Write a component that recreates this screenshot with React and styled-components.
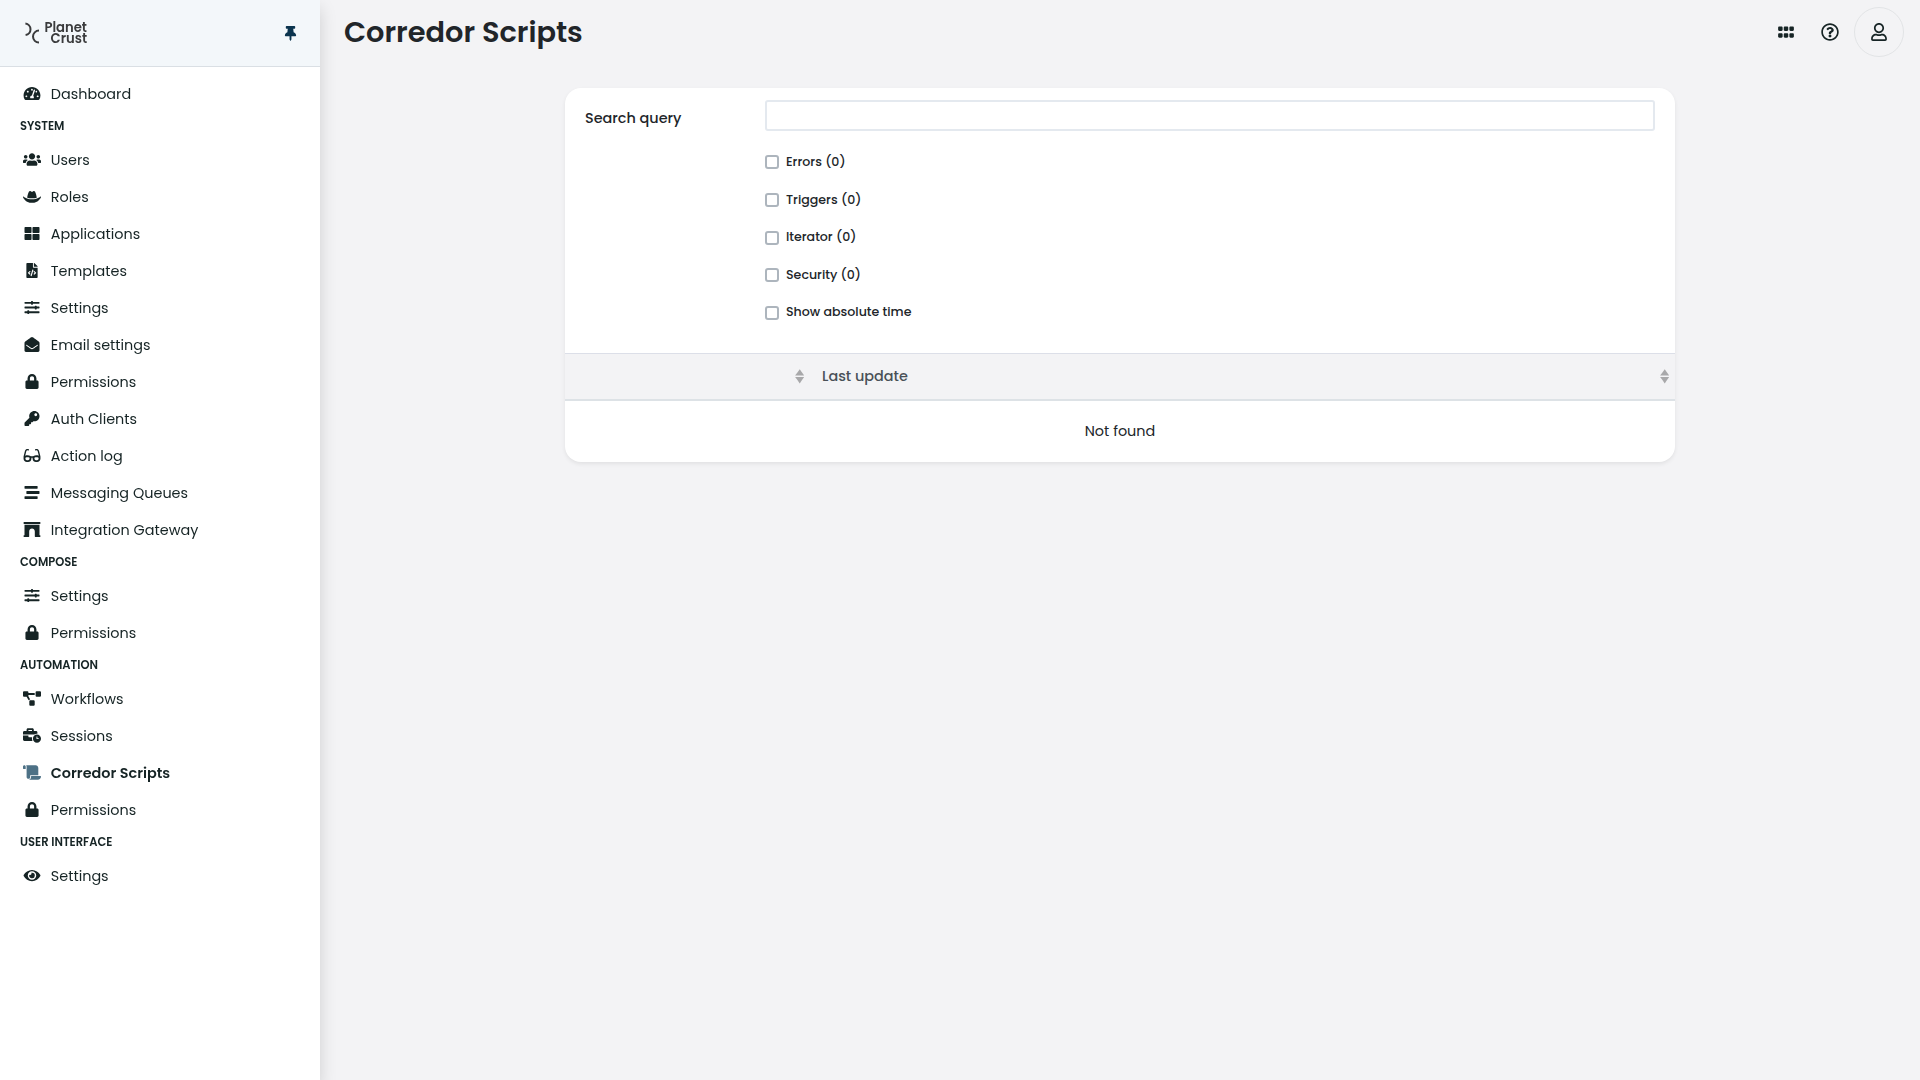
import React from 'react';
import styled, { createGlobalStyle } from 'styled-components';
import {
  FaTachometerAlt, FaUsers, FaHatCowboy, FaThLarge, FaFileCode, FaSlidersH, FaEnvelopeOpen, FaLock, FaKey,
  FaGlasses, FaStream, FaArchway, FaProjectDiagram, FaBusinessTime, FaScroll, FaEye, FaThumbtack,
  FaGripHorizontal, FaRegQuestionCircle, FaRegUser,
} from 'react-icons/fa';

const GlobalStyle = createGlobalStyle`
  *, *::before, *::after { box-sizing: border-box; }
  body {
    margin: 0;
    background: #f3f3f5;
    color: #212529;
    font-family: Poppins, Inter, "Liberation Sans", sans-serif;
    font-size: 14.4px;
    line-height: 1.5;
  }
`;

const Page = styled.div`
  display: flex;
  height: 100vh;
  overflow: hidden;
`;

const Sidebar = styled.aside`
  flex: 0 0 320px;
  display: flex;
  flex-direction: column;
  background: #fff;
  color: #162425;
  box-shadow: 0 8px 16px rgba(0, 0, 0, 0.15);
  will-change: transform;
`;

const SidebarHeader = styled.div`
  height: 67px;
  display: flex;
  align-items: center;
  justify-content: space-between;
  padding: 0 24px 0 25px;
  background: #f3f7fa;
  border-bottom: 1px solid #dadfe4;
`;

const Logo = styled.div`
  display: flex;
  align-items: center;
  gap: 4.4px;
  color: #3a3b3c;

  svg { display: block; }
`;

const LogoText = styled.div`
  display: flex;
  flex-direction: column;
  align-items: flex-end;
  font-size: 13.2px;
  font-weight: 600;
  line-height: 11px;
`;

const PinButton = styled.button`
  display: flex;
  justify-content: center;
  width: 11px;
  padding: 0;
  border: 0;
  background: none;
  color: #0b344e;
  font-size: 15px;

  svg { flex: none; }
`;

const Nav = styled.nav`
  display: flex;
  flex-direction: column;
  padding: 9.5px 20px 0;
`;

const NavHeading = styled.div`
  height: 29px;
  padding-bottom: 2px;
  display: flex;
  align-items: center;
  font-size: 11.52px;
  font-weight: 600;
  text-transform: uppercase;
`;

const NavItem = styled.a`
  height: 37px;
  display: flex;
  align-items: center;
  gap: 9.8px;
  padding-left: 3px;
  font-weight: ${(p) => (p.$active ? 600 : 400)};

  svg {
    width: 18px;
    height: 15px;
    margin-bottom: 3px;
    color: ${(p) => (p.$active ? '#4d7186' : 'inherit')};
  }
`;

const Main = styled.main`
  flex: 1;
  display: flex;
  flex-direction: column;
`;

const Topbar = styled.header`
  height: 64px;
  display: flex;
  align-items: center;
  justify-content: space-between;
  padding: 0 16px 0 24px;
`;

const Title = styled.h1`
  margin: 0;
  font-size: 28.8px;
  font-weight: 600;
  line-height: 1.2;
`;

const Tools = styled.div`
  display: flex;
  align-items: center;
  color: #162425;
  font-size: 18px;
`;

const Tool = styled.button`
  width: ${(p) => p.$width}px;
  height: 44px;
  display: flex;
  align-items: center;
  justify-content: center;
  padding: 0;
  border: 0;
  background: none;
  color: inherit;
  font-size: inherit;
`;

const Avatar = styled(Tool)`
  height: 50px;
  margin-left: 2px;
  border: 1px solid #e2e4e6;
  border-radius: 50%;
`;

const Content = styled.section`
  display: flex;
  justify-content: center;
  padding-top: 24px;
`;

const Card = styled.div`
  width: 1110px;
  height: 374px;
  overflow: hidden;
  border-radius: 16px;
  background: #fff;
  box-shadow: 0 2px 4px rgba(0, 0, 0, 0.075);
`;

const Filters = styled.div`
  height: 265px;
  display: grid;
  grid-template-columns: 180px 890px;
  padding: 12px 20px 0;
`;

const FilterLabel = styled.label`
  padding-top: 8.3px;
  font-weight: 500;
`;

const SearchInput = styled.input`
  display: block;
  width: 100%;
  height: 31px;
  margin-bottom: 12.7px;
  border: 2px solid #e4e9ef;
  border-radius: 3px;
  background: #fff;
  font: inherit;
`;

const Check = styled.label`
  height: 37.6px;
  display: flex;
  align-items: center;
  gap: 7px;
  font-size: 12.6px;
  font-weight: 500;

  span { padding-bottom: 0.1px; }
`;

const Box = styled.input`
  appearance: none;
  width: 14px;
  height: 14px;
  margin: 0;
  border: 2px solid #adb5bd;
  border-radius: 3px;
  background: #fff;
`;

const TableHead = styled.div`
  height: 48px;
  display: grid;
  grid-template-columns: 245px 1fr;
  border-top: 1px solid #dcdfe8;
  border-bottom: 2px solid #dde2e6;
  background: #f3f3f5;
`;

const HeadCell = styled.div`
  display: flex;
  align-items: center;
  justify-content: space-between;
  padding: 0 6px 0 12px;
  color: #495057;
  font-weight: 500;

  svg { margin-left: auto; }
`;

const Empty = styled.div`
  height: 61px;
  display: flex;
  align-items: center;
  justify-content: center;
`;

const SortIcon = () => (
  <svg width="9.36" height="14.4" viewBox="0 0 101 101" preserveAspectRatio="none" fill="#000" opacity="0.3">
    <path d="M51 1l25 23 24 22H1l25-22zM51 101l25-23 24-22H1l25 22z" />
  </svg>
);

const LogoMark = () => (
  <svg width="15" height="22" viewBox="0 0 15 22" fill="none" stroke="currentColor" strokeWidth="2">
    <path d="M0.4 1.6A5.75 5.75 0 0 1 0.6 13" />
    <path d="M14 8.6A6 6 0 0 0 14 20.6" />
  </svg>
);

const sections = [
  { items: [[FaTachometerAlt, 'Dashboard']] },
  {
    heading: 'System',
    items: [
      [FaUsers, 'Users'],
      [FaHatCowboy, 'Roles'],
      [FaThLarge, 'Applications'],
      [FaFileCode, 'Templates'],
      [FaSlidersH, 'Settings'],
      [FaEnvelopeOpen, 'Email settings'],
      [FaLock, 'Permissions'],
      [FaKey, 'Auth Clients'],
      [FaGlasses, 'Action log'],
      [FaStream, 'Messaging Queues'],
      [FaArchway, 'Integration Gateway'],
    ],
  },
  { heading: 'Compose', items: [[FaSlidersH, 'Settings'], [FaLock, 'Permissions']] },
  {
    heading: 'Automation',
    items: [
      [FaProjectDiagram, 'Workflows'],
      [FaBusinessTime, 'Sessions'],
      [FaScroll, 'Corredor Scripts', true],
      [FaLock, 'Permissions'],
    ],
  },
  { heading: 'User Interface', items: [[FaEye, 'Settings']] },
];

const checks = ['Errors (0)', 'Triggers (0)', 'Iterator (0)', 'Security (0)', 'Show absolute time'];

export default function App() {
  return (
    <Page>
      <GlobalStyle />
      <Sidebar>
        <SidebarHeader>
          <Logo>
            <LogoMark />
            <LogoText>
              <span>Planet</span>
              <span>Crust</span>
            </LogoText>
          </Logo>
          <PinButton aria-label="Pin sidebar"><FaThumbtack /></PinButton>
        </SidebarHeader>
        <Nav>
          {sections.map(({ heading, items }) => (
            <React.Fragment key={heading || 'top'}>
              {heading && <NavHeading>{heading}</NavHeading>}
              {items.map(([Icon, label, active]) => (
                <NavItem key={label} $active={active}>
                  <Icon />
                  <span>{label}</span>
                </NavItem>
              ))}
            </React.Fragment>
          ))}
        </Nav>
      </Sidebar>
      <Main>
        <Topbar>
          <Title>Corredor Scripts</Title>
          <Tools>
            <Tool $width={44} aria-label="Applications"><FaGripHorizontal /></Tool>
            <Tool $width={44} aria-label="Help"><FaRegQuestionCircle /></Tool>
            <Avatar $width={50} aria-label="Profile"><FaRegUser /></Avatar>
          </Tools>
        </Topbar>
        <Content>
          <Card>
            <Filters>
              <FilterLabel htmlFor="query">Search query</FilterLabel>
              <div>
                <SearchInput id="query" />
                {checks.map((label) => (
                  <Check key={label}>
                    <Box type="checkbox" />
                    <span>{label}</span>
                  </Check>
                ))}
              </div>
            </Filters>
            <TableHead>
              <HeadCell><SortIcon /></HeadCell>
              <HeadCell>Last update<SortIcon /></HeadCell>
            </TableHead>
            <Empty>Not found</Empty>
          </Card>
        </Content>
      </Main>
    </Page>
  );
}
